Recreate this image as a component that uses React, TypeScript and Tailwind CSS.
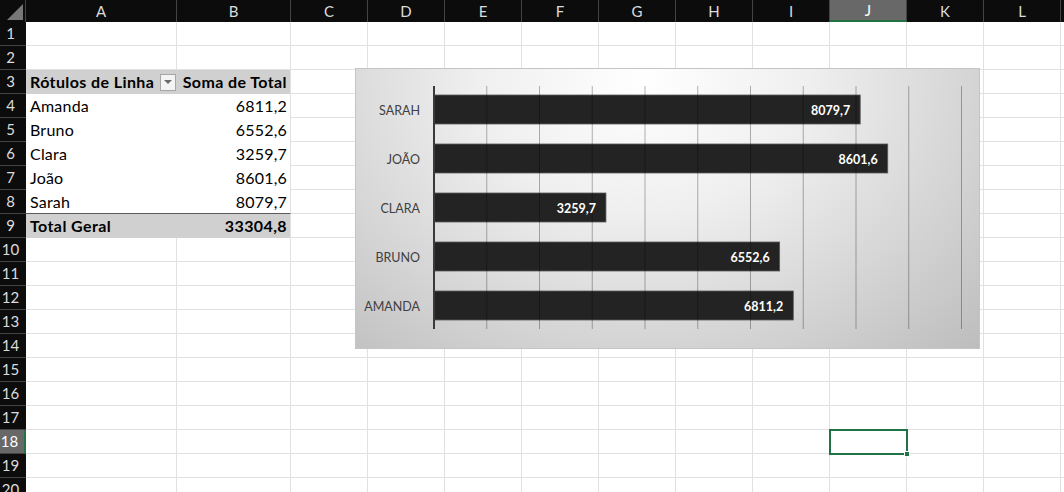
import React from "react";

const COLS = ["A", "B", "C", "D", "E", "F", "G", "H", "I", "J", "K", "L", "M"];
const WIDTHS = [151, 114, 77, 77, 77, 77, 77, 77, 77, 77, 77, 77, 77];

const pivot: Record<number, [string, string]> = {
  4: ["Amanda", "6811,2"],
  5: ["Bruno", "6552,6"],
  6: ["Clara", "3259,7"],
  7: ["João", "8601,6"],
  8: ["Sarah", "8079,7"],
};

const bars = [
  { name: "SARAH", value: 8079.7, label: "8079,7" },
  { name: "JOÃO", value: 8601.6, label: "8601,6" },
  { name: "CLARA", value: 3259.7, label: "3259,7" },
  { name: "BRUNO", value: 6552.6, label: "6552,6" },
  { name: "AMANDA", value: 6811.2, label: "6811,2" },
];

function Chart() {
  const x0 = 79;
  const scale = 52.75 / 1000;
  return (
    <div className="absolute left-[355px] top-[68px] w-[625px] h-[281px] border border-[#c4c4c4] bg-[radial-gradient(ellipse_at_46%_4%,#ffffff_0%,#efefef_35%,#d4d4d4_70%,#bdbdbd_100%)]">
      <svg width="625" height="281" className="absolute -left-px -top-px" style={{ fontFamily: "Lato, 'Liberation Sans', sans-serif" }}>
        {bars.map((b, i) => {
          const y = 27 + i * 49;
          const w = b.value * scale;
          return (
            <g key={b.name}>
              <text x={65} y={y + 15} textAnchor="end" dominantBaseline="central" fontSize="12.5" fill="#404040">
                {b.name}
              </text>
              <rect x={x0} y={y} width={w} height={29} fill="#232323" stroke="#5a5a5a" strokeWidth="0.8" />
            </g>
          );
        })}
        {Array.from({ length: 10 }, (_, k) => {
          const x = x0 + 52.75 * (k + 1);
          return <line key={k} x1={x} x2={x} y1={18} y2={261} stroke="#000" strokeOpacity="0.3" strokeWidth="1" />;
        })}
        {bars.map((b, i) => {
          const y = 27 + i * 49;
          const w = b.value * scale;
          return (
            <text key={b.label} x={x0 + w - 10} y={y + 15} textAnchor="end" dominantBaseline="central" fontSize="12.5" fontWeight="700" fill="#ffffff">
              {b.label}
            </text>
          );
        })}
        <line x1={x0} x2={x0} y1={18} y2={261} stroke="#3a3a3a" strokeWidth="2" />
      </svg>
    </div>
  );
}

function Cell({ r, c }: { r: number; c: number }) {
  const w = WIDTHS[c];
  const inPivot = r >= 3 && r <= 9 && c <= 1;
  if (!inPivot) {
    return <div style={{ width: w }} className="h-[24px] shrink-0 border-r border-b border-[#e1e1e1] bg-white" />;
  }
  const head = r === 3 || r === 9;
  const base = `h-[24px] shrink-0 flex items-center text-[16px] text-black whitespace-nowrap ${
    head ? "bg-[#d0d0d0] font-bold tracking-[0.4px]" : "bg-white tracking-[0.2px]"
  } ${r === 8 ? "border-b border-[#5a5a5a]" : ""}`;
  if (c === 0) {
    return (
      <div style={{ width: w }} className={`${base} pl-[4px]`}>
        {r === 3 ? (
          <>
            <span>Rótulos de Linha</span>
            <span className="ml-auto mr-[1px] w-[16px] h-[17px] bg-[#f4f4f4] border border-[#a6a6a6] flex items-center justify-center">
              <span className="w-0 h-0 border-l-[4px] border-r-[4px] border-t-[4px] border-l-transparent border-r-transparent border-t-[#6b6b6b]" />
            </span>
          </>
        ) : r === 9 ? (
          "Total Geral"
        ) : (
          pivot[r][0]
        )}
      </div>
    );
  }
  return (
    <div style={{ width: w }} className={`${base} justify-end pr-[3px] border-r border-r-[#e1e1e1]`}>
      {r === 3 ? "Soma de Total" : r === 9 ? "33304,8" : pivot[r][1]}
    </div>
  );
}

export default function App() {
  const rows = Array.from({ length: 20 }, (_, i) => i + 1);
  return (
    <div className="relative w-[1064px] h-[492px] overflow-hidden bg-white" style={{ fontFamily: "Lato, 'Liberation Sans', sans-serif" }}>
      <div className="flex h-[22px]">
        <div className="w-[26px] shrink-0 bg-[#0c0c0c] border-r border-[#444] flex items-end justify-end pr-[2px] pb-[2px]">
          <svg width="16" height="16" viewBox="0 0 16 16">
            <polygon points="16,0 16,16 0,16" fill="#777" />
          </svg>
        </div>
        {COLS.map((c, i) => (
          <div
            key={c}
            style={{ width: WIDTHS[i] }}
            className={`shrink-0 flex items-center justify-center text-[15px] border-r border-[#444] ${
              c === "J" ? "bg-[#686868] text-white border-b-2 border-b-[#217346]" : "bg-[#0c0c0c] text-[#dcdcdc]"
            }`}
          >
            {c === "M" ? "" : c}
          </div>
        ))}
      </div>
      {rows.map((r) => (
        <div key={r} className="flex">
          <div
            className={`w-[26px] h-[24px] shrink-0 flex items-center justify-center pr-[5px] text-[15px] border-b border-[#444] ${
              r === 18 ? "bg-[#686868] text-white border-r-2 border-r-[#217346]" : "bg-[#0c0c0c] text-[#dcdcdc]"
            }`}
          >
            {r}
          </div>
          {COLS.map((c, i) => (
            <Cell key={c} r={r} c={i} />
          ))}
        </div>
      ))}
      <Chart />
      <div className="absolute left-[829px] top-[429px] w-[79px] h-[26px] border-2 border-[#217346]">
        <div className="absolute -right-[4px] -bottom-[4px] w-[6px] h-[6px] bg-[#217346] border border-white" />
      </div>
    </div>
  );
}
